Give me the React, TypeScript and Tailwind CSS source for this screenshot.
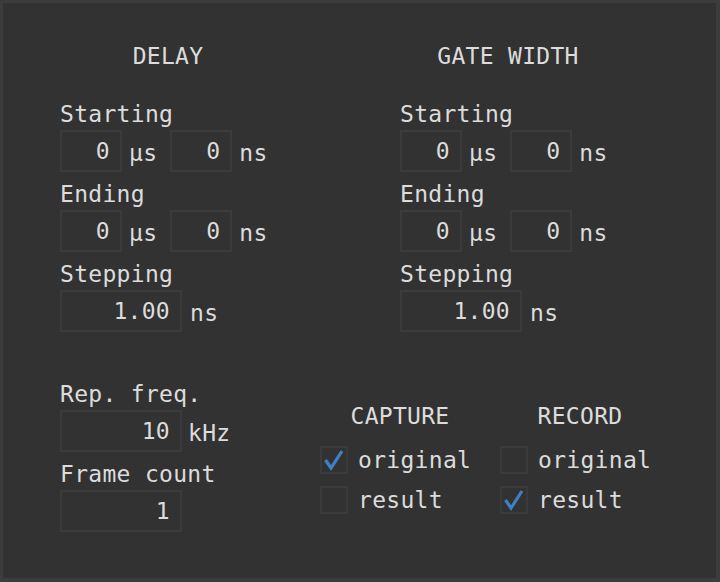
import React from 'react';

const Box = ({ value, width }: { value: string; width: string }) => (
  <div className={`${width} h-[42px] border-2 border-[#3b3b3b] flex items-center justify-end pr-[10px]`}>
    {value}
  </div>
);

const Unit = ({ children, ml = 'ml-[7px]' }: { children: React.ReactNode; ml?: string }) => (
  <span className={`${ml} mt-[3px]`}>{children}</span>
);

const TimeField = ({ label }: { label: string }) => (
  <div className="mb-[9px]">
    <div>{label}</div>
    <div className="flex items-center mt-[3px]">
      <Box value="0" width="w-[62px]" />
      <Unit>μs</Unit>
      <div className="ml-[13px]">
        <Box value="0" width="w-[62px]" />
      </div>
      <Unit>ns</Unit>
    </div>
  </div>
);

const StepField = () => (
  <div>
    <div>Stepping</div>
    <div className="flex items-center mt-[3px]">
      <Box value="1.00" width="w-[122px]" />
      <Unit ml="ml-[8px]">ns</Unit>
    </div>
  </div>
);

const Section = ({ title }: { title: string }) => (
  <div>
    <div className="w-[216px] text-center">{title}</div>
    <div className="mt-[32px]">
      <TimeField label="Starting" />
      <TimeField label="Ending" />
      <StepField />
    </div>
  </div>
);

const Check = ({ checked, label }: { checked?: boolean; label: string }) => (
  <div className="flex items-center pl-[10px]">
    <div className="w-[28px] h-[28px] border-2 border-[#3b3b3b] flex items-center justify-center">
      {checked && (
        <svg width="24" height="24" viewBox="0 0 24 24">
          <path d="M3.5 12 L9 20 L20 3" fill="none" stroke="#3d80c6" strokeWidth="3.2" strokeLinejoin="miter" />
        </svg>
      )}
    </div>
    <span className="ml-[10px]">{label}</span>
  </div>
);

const CheckGroup = ({ title, first, second }: { title: string; first?: boolean; second?: boolean }) => (
  <div className="w-[180px]">
    <div className="text-center">{title}</div>
    <div className="mt-[17px] flex flex-col gap-[12px]">
      <Check checked={first} label="original" />
      <Check checked={second} label="result" />
    </div>
  </div>
);

export default function App() {
  return (
    <div className="w-[720px] h-[582px] bg-[#323232] border-[3px] border-r-4 border-b-4 border-[#3c3c3c] font-['DejaVu_Sans_Mono',monospace] text-[23px] leading-[26px] tracking-[0.3px] text-[#dcdcdc]">
      <div className="flex pt-[40px]">
        <div className="w-[337px] pl-[57px]">
          <Section title="DELAY" />
        </div>
        <div className="pl-[60px]">
          <Section title="GATE WIDTH" />
        </div>
      </div>

      <div className="flex mt-[49px]">
        <div className="w-[307px] pl-[57px]">
          <div>Rep. freq.</div>
          <div className="flex items-center mt-[3px]">
            <Box value="10" width="w-[122px]" />
            <Unit ml="ml-[6px]">kHz</Unit>
          </div>
          <div className="mt-[9px]">Frame count</div>
          <div className="flex items-center mt-[3px]">
            <Box value="1" width="w-[122px]" />
          </div>
        </div>
        <div className="flex pt-[22px]">
          <CheckGroup title="CAPTURE" first />
          <CheckGroup title="RECORD" second />
        </div>
      </div>
    </div>
  );
}
